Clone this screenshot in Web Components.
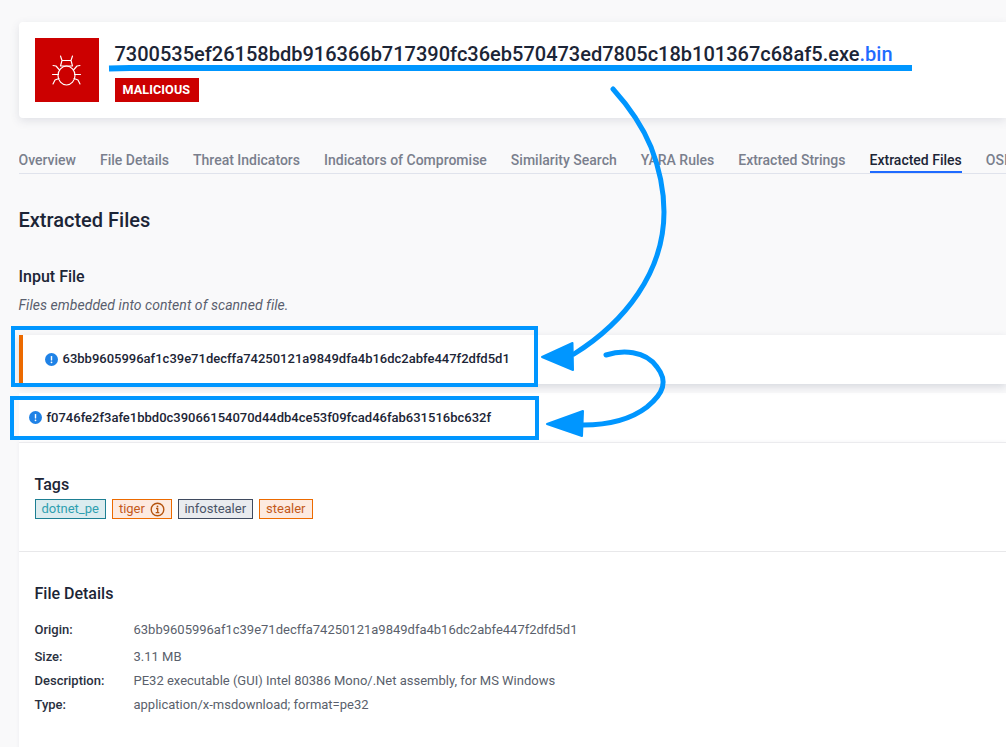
<!DOCTYPE html>
<html><head><meta charset="utf-8">
<style>
html,body{margin:0;padding:0;background:#f9f9fa;height:747px;overflow:hidden}
body{font-family:Roboto,"Liberation Sans",sans-serif;color:#1c2536}
</style></head>
<body>
<report-page>
  <file-header></file-header>
  <nav-tabs></nav-tabs>
  <section-intro></section-intro>
  <file-row kind="active" hash="63bb9605996af1c39e71decffa74250121a9849dfa4b16dc2abfe447f2dfd5d1"></file-row>
  <file-row hash="f0746fe2f3afe1bbd0c39066154070d44db4ce53f09fcad46fab631516bc632f"></file-row>
  <file-panel></file-panel>
</report-page>
<annotation-layer></annotation-layer>
<script>
function def(name, html){
  customElements.define(name, class extends HTMLElement{
    connectedCallback(){
      if(this.shadowRoot) return;
      const r=this.attachShadow({mode:'open'});
      r.innerHTML = typeof html==='function'?html(this):html;
    }
  });
}
def('report-page',`<style>:host{display:block;padding:22px 0 0 18.5px;box-sizing:border-box;width:1006px;height:747px;overflow:hidden}</style><slot></slot>`);
def('file-header',`<style>
:host{display:flex;gap:16px;height:96px;box-sizing:border-box;padding:16px;background:#fff;border-radius:4px 0 0 4px;box-shadow:0 3px 10px rgba(60,70,100,.13)}
.ico{width:64px;height:64px;background:#cc0000;display:flex;align-items:center;justify-content:center;flex:none}
h1{margin:4px 0 0;font:500 20px/24px Roboto,sans-serif;color:#1c2536;white-space:nowrap}
h1 span{color:#1f6bff}
.v{display:inline-block;margin-top:12px;background:#cc0000;color:#fff;font:700 12.6px/24px Roboto,sans-serif;padding:0 8.500px 0 8px;letter-spacing:.1px}
</style>
<div class="ico"><svg width="30" height="31" viewBox="0 0 30 31" fill="none" stroke="#fff" stroke-width="1.150" stroke-linecap="round" stroke-linejoin="round">
<ellipse cx="14.500" cy="20.500" rx="8.500" ry="9.500"/>
<path d="M8.500 1l1.500 4.500 -1.500 5.500M20.500 1l-1.500 4.500 1.500 5.500M10 5.500h9M8.500 11h12"/>
<path d="M1 10.500l3 .5 3.500 4M28 10.500l-3 .5 -3.500 4M.5 19.500h6M28.500 19.500h-6M1 29l2-4 4-1.500M28 29l-2-4 -4-1.500"/>
</svg></div>
<div><h1>7300535ef26158bdb916366b717390fc36eb570473ed7805c18b101367c68af5.exe<span>.bin</span></h1><div class="v">MALICIOUS</div></div>`);
def('nav-tabs',`<style>
:host{display:flex;gap:24px;margin-top:26px;height:29px;border-bottom:1px solid #e0e3ec;white-space:nowrap;overflow:hidden}
a{font:500 14px/32px Roboto,sans-serif;color:#7a7f8d;height:29px;box-sizing:border-box;flex:none}
a.on{color:#1c2536;border-bottom:2px solid #1f6bff}
</style><a>Overview</a><a>File Details</a><a>Threat Indicators</a><a>Indicators of Compromise</a><a>Similarity Search</a><a>YARA Rules</a><a>Extracted Strings</a><a class="on">Extracted Files</a><a>OSINT</a>`);
def('section-intro',`<style>
:host{display:block;padding-top:32px}
h2{margin:0;font:500 20px/28px Roboto,sans-serif;color:#1c2536}
h3{margin:31px 0 0;font:500 16px/24px Roboto,sans-serif;color:#1c2536}
p{margin:6px 0 0;font:italic 400 14px/20px Roboto,sans-serif;color:#5a5f6e;letter-spacing:.05px}
</style><h2>Extracted Files</h2><h3>Input File</h3><p>Files embedded into content of scanned file.</p>`);
const info=`<svg width="13" height="13" viewBox="0 0 13 13"><circle cx="6.500" cy="6.500" r="6.500" fill="#1f82e6"/><rect x="5.800" y="3" width="1.400" height="4.600" rx=".6" fill="#fff"/><circle cx="6.500" cy="9.300" r=".9" fill="#fff"/></svg>`;
def('file-row',el=>{const a=el.getAttribute('kind')==='active';return `<style>
:host{display:flex;align-items:center;gap:5px;background:#fff;height:${a?49:49}px;box-sizing:border-box;
margin-top:${a?20:9}px;padding-left:${a?22:10}px;padding-bottom:${a?1:0}px;
${a?'border-left:4px solid #ec6a00;box-shadow:0 3px 8px rgba(60,70,100,.18);position:relative;':''}}
span{font:500 13px/16px Roboto,sans-serif;color:#1c2536;white-space:nowrap}
svg{flex:none}
</style>${info}<span>${el.getAttribute('hash')}</span>`});
def('tag-chip',el=>{const c={teal:['#1d7f93','#dcecef','#2f9fb0'],orange:['#ec6a00','#fdeae0','#c4591a'],slate:['#3f4a5f','#e9ebef','#4a5468']}[el.getAttribute('tone')];return `<style>
:host{display:inline-flex;align-items:center;gap:5px;height:20px;box-sizing:border-box;padding:0 6px;border:1px solid ${c[0]};background:${c[1]};color:${c[2]};font:400 13px/18px Roboto,sans-serif}
</style><slot></slot>`});
def('detail-row',el=>`<style>
:host{display:flex;font:400 13px/16px Roboto,sans-serif;color:#5a5f6c;white-space:nowrap}
b{width:99px;font-weight:500;color:#2a3040;flex:none}
</style><b>${el.getAttribute('label')}</b><slot></slot>`);
def('file-panel',`<style>
:host{display:block;background:#fff;border-top:1px solid #ebebee;box-shadow:0 0 4px rgba(60,70,100,.06);height:320px}
h4{margin:0;font:500 16px/24px Roboto,sans-serif;color:#1c2536}
.t{padding:30px 16px 32px;border-bottom:1px solid #e8e8ea}
.chips{display:flex;gap:6px;margin-top:2px}
.f{padding:30px 16px}
.rows{margin-top:16px;display:flex;flex-direction:column}
</style>
<div class="t"><h4>Tags</h4><div class="chips">
<tag-chip tone="teal">dotnet_pe</tag-chip>
<tag-chip tone="orange">tiger <svg width="15" height="15" viewBox="0 0 15 15" fill="none" stroke="#b5540f"><circle cx="7.500" cy="7.500" r="6.300" stroke-width="1.400"/><path d="M6 6.500h1.700v4M5.700 10.700h3.600" stroke-width="1.300"/><circle cx="7.500" cy="4.300" r=".9" fill="#b5540f" stroke="none"/></svg></tag-chip>
<tag-chip tone="slate" style="padding:0 5.500px">infostealer</tag-chip>
<tag-chip tone="orange" style="padding:0 6.500px">stealer</tag-chip>
</div></div>
<div class="f"><h4>File Details</h4><div class="rows">
<detail-row label="Origin:" style="margin-bottom:11px">63bb9605996af1c39e71decffa74250121a9849dfa4b16dc2abfe447f2dfd5d1</detail-row>
<detail-row label="Size:" style="margin-bottom:8px">3.11 MB</detail-row>
<detail-row label="Description:" style="margin-bottom:8px">PE32 executable (GUI) Intel 80386 Mono/.Net assembly, for MS Windows</detail-row>
<detail-row label="Type:">application/x-msdownload; format=pe32</detail-row>
</div></div>`);
def('annotation-layer',`<style>:host{position:absolute;left:0;top:0;width:1006px;height:747px;pointer-events:none}svg{display:block}</style>
<svg width="1006" height="747" viewBox="0 0 1006 747" fill="none">
<path d="M109 68.500L130 68L912 68" stroke="#0096ff" stroke-width="6"/>
<path d="M613 89C632 110 644 130 651 147C660 170 664 190 664 212C664 272 625 322 574 354" stroke="#0096ff" stroke-width="5" stroke-linecap="round"/>
<path d="M542 357L572.500 343L573 370Z" fill="#0096ff" stroke="#0096ff" stroke-linejoin="round" stroke-width="2"/>
<path d="M606 355C622 350 645 350 657 367C668 381 664 393 647 407C630 420 610 425 583 425" stroke="#0096ff" stroke-width="5" stroke-linecap="round"/>
<path d="M547 424L583 411L582 436Z" fill="#0096ff" stroke="#0096ff" stroke-linejoin="round" stroke-width="2"/>
<rect x="13" y="328" width="523" height="57" stroke="#0096ff" stroke-width="4"/>
<rect x="12" y="398" width="525" height="40" stroke="#0096ff" stroke-width="4"/>
</svg>`);
</script>
</body></html>
